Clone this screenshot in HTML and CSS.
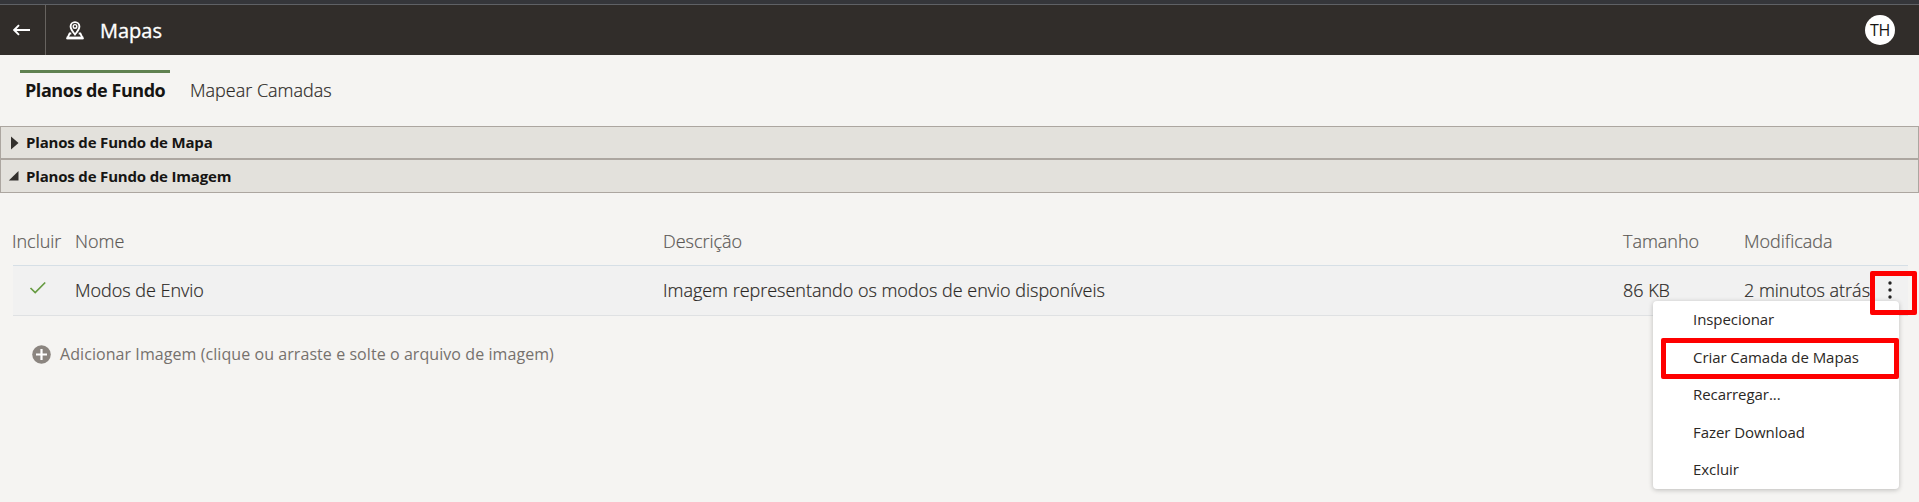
FILE: index.html
```html
<!DOCTYPE html>
<html lang="pt-BR">
<head>
<meta charset="utf-8">
<title>Mapas</title>
<link rel="stylesheet" href="styles.css">
</head>
<body>
<header class="header">
  <div class="back"><svg width="18" height="12" viewBox="0 0 18 12"><path d="M17 6H1.5M6 1.2L1.2 6L6 10.8" fill="none" stroke="#fff" stroke-width="1.9"/></svg></div>
  <svg class="map-icon" width="18" height="19" viewBox="0 0 18 19" fill="none" stroke="#fff"><path d="M9 13.5C6.5 10.5 4.6 8.2 4.6 5.5a4.4 4.4 0 0 1 8.8 0C13.4 8.2 11.5 10.5 9 13.5Z" stroke-width="1.9"/><circle cx="9" cy="5.4" r="1.8" stroke-width="1.4"/><path d="M5.3 12.5H3.6L1.5 17H16.5L14.4 12.5H12.7" stroke-width="1.8"/><path d="M.6 17H17.4" stroke-width="2.8"/></svg>
  <h1 class="title">Mapas</h1>
  <div class="avatar">TH</div>
</header>
<nav class="tabs">
  <div class="tab active">Planos de Fundo</div>
  <div class="tab">Mapear Camadas</div>
</nav>
<section class="panel closed">
  <svg class="caret" width="12" height="14" viewBox="0 0 12 14"><path d="M3 .5L10.5 7L3 13.5Z" fill="#33302d"/></svg>
  <span>Planos de Fundo de Mapa</span>
</section>
<section class="panel open">
  <svg class="caret" width="12" height="14" viewBox="0 0 12 14"><path d="M.8 11.5H10.5V2Z" fill="#33302d"/></svg>
  <span>Planos de Fundo de Imagem</span>
</section>
<main class="content">
  <div class="row head">
    <span>Incluir</span><span>Nome</span><span>Descrição</span><span>Tamanho</span><span>Modificada</span>
  </div>
  <div class="row item">
    <span class="check"><svg width="18" height="14" viewBox="0 0 18 14"><path d="M1.5 7L6.2 11.5L16.2 1.5" fill="none" stroke="#669b41" stroke-width="1.7"/></svg></span><span>Modos de Envio</span><span>Imagem representando os modos de envio disponíveis</span><span>86 KB</span><span>2 minutos atrás</span>
    <svg class="dots" width="6" height="20" viewBox="0 0 6 20" fill="#222"><circle cx="3" cy="3" r="1.7"/><circle cx="3" cy="10" r="1.7"/><circle cx="3" cy="17" r="1.7"/></svg>
  </div>
  <div class="add">
    <svg width="19" height="19" viewBox="0 0 19 19"><circle cx="9.5" cy="9.5" r="9.3" fill="#8b8580"/><path d="M9.5 4v11M4 9.5h11" stroke="#fff" stroke-width="2.2"/></svg>
    <span>Adicionar Imagem (clique ou arraste e solte o arquivo de imagem)</span>
  </div>
</main>
<ul class="menu">
  <li>Inspecionar</li>
  <li>Criar Camada de Mapas</li>
  <li>Recarregar...</li>
  <li>Fazer Download</li>
  <li>Excluir</li>
</ul>
<div class="mark mark-dots"></div>
<div class="mark mark-item"></div>
</body>
</html>
```
FILE: styles.css
```css
* { box-sizing: border-box; }
body { margin: 0; height: 502px; overflow: hidden; position: relative; background: #f5f4f2; color: #2b2825; font-family: "Open Sans", "Noto Sans", sans-serif; white-space: nowrap; }
svg { display: block; flex: none; }
.header { height: 55px; padding-top: 5px; display: flex; align-items: center; background: linear-gradient(#35363a 0 4px, #5f6165 4px 5px, #312d2a 5px); color: #fff; }
.back { width: 46px; height: 50px; padding-left: 13px; display: flex; align-items: center; border-right: 1px solid #67635f; }
.map-icon { margin-left: 20px; }
.title { margin: 0 auto 0 16px; font-size: 20px; font-weight: 500; line-height: 28px; padding-top: 1px; -webkit-text-stroke: .35px #fff; }
.avatar { width: 30px; height: 30px; margin-right: 24px; border-radius: 50%; background: #fff; color: #161513; font-size: 16px; line-height: 31px; text-align: center; letter-spacing: -.3px; }
.tabs { height: 71px; padding: 15px 0 0 20px; display: flex; }
.tab { height: 40px; padding: 5px 0 0 20px; font-size: 18px; line-height: 25px; border-top: 3px solid transparent; font-weight: 300; -webkit-text-stroke: .2px; }
.tab.active { width: 150px; padding-left: 5px; border-color: #5f8150; color: #161513; font-weight: 700; letter-spacing: -.45px; -webkit-text-stroke: 0; }
.panel { display: flex; align-items: center; padding-left: 7px; gap: 6px; border: 1px solid #aca6a0; background: #e3e1dc; color: #161513; font-size: 15px; font-weight: 700; letter-spacing: -.17px; }
.closed { height: 33px; }
.closed span { padding-bottom: 2px; }
.open { height: 34px; }
.open span { padding-bottom: 1px; }
.content { padding: 0 11px 0 13px; }
.row { position: relative; display: grid; grid-template-columns: 62px 588px 960px 121px 1fr; align-items: center; font-size: 18px; font-weight: 300; letter-spacing: -.02px; -webkit-text-stroke: .2px; }
.head { height: 72px; padding-top: 23px; line-height: 24px; color: #5b5855; }
.head span:first-child { margin-left: -1px; }
.item { height: 51px; background: #f1f1f1; border-top: 1px solid #d6dfe6; border-bottom: 1px solid #dfe1e3; }
.item span { padding-bottom: 2px; }
.item .check { padding: 0 0 5px 16px; }
.dots { position: absolute; left: 1874px; top: 14px; }
.add { display: flex; align-items: center; gap: 9px; height: 76px; padding-left: 19px; font-size: 16px; color: #76716d; letter-spacing: .07px; }
.menu { position: absolute; left: 1653px; top: 301px; width: 246px; height: 188px; margin: 0; padding: 0 0 0 40px; list-style: none; background: #fff; border-radius: 4px; box-shadow: 0 1px 5px rgba(0,0,0,.24); font-size: 15px; letter-spacing: -.06px; }
.menu li { height: 37.5px; line-height: 37px; }
.mark { position: absolute; border: 5px solid #fe0000; border-radius: 2px; }
.mark-dots { left: 1870px; top: 271px; width: 47px; height: 44px; }
.mark-item { left: 1661px; top: 338px; width: 238px; height: 41px; }
```
